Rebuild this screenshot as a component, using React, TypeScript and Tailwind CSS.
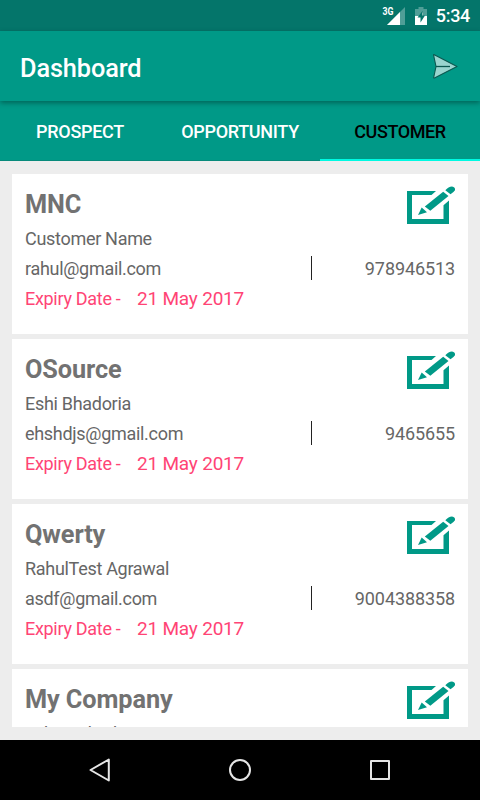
import { useState } from 'react'

interface Customer {
  company: string
  name: string
  email?: string
  phone?: string
  expiry?: string
}

const customers: Customer[] = [
  { company: 'MNC', name: 'Customer Name', email: 'rahul@gmail.com', phone: '978946513', expiry: '21 May 2017' },
  { company: 'OSource', name: 'Eshi Bhadoria', email: 'ehshdjs@gmail.com', phone: '9465655', expiry: '21 May 2017' },
  { company: 'Qwerty', name: 'RahulTest Agrawal', email: 'asdf@gmail.com', phone: '9004388358', expiry: '21 May 2017' },
  { company: 'My Company', name: 'Eshita Bhadoria' },
]

const tabs = ['PROSPECT', 'OPPORTUNITY', 'CUSTOMER']

function StatusBar() {
  return (
    <div className="flex h-[31px] shrink-0 items-center justify-end bg-[#04756a] pr-[10px] text-white">
      <svg className="h-[31px] w-[54px]" viewBox="380 0 54 31">
        <text x="382.5" y="15" fontSize="11.5" fontWeight="700" fill="#fff" textLength="11" lengthAdjust="spacingAndGlyphs">3G</text>
        <path d="M405 7V25H387Z" fill="#fff" fillOpacity=".3" />
        <path d="M400 12V25H387Z" fill="#fff" />
        <path d="M415 9H418.500V7H423.500V9H427V25H415Z" fill="#fff" fillOpacity=".3" />
        <path d="M415 16H420L423 12V16H427V25H415Z" fill="#fff" />
        <path d="M422.500 11L417.500 17.500H420.500V22.500L425 15.500H422.500Z" fill="#04756a" />
      </svg>
      <span className="w-[36px] pt-px text-right text-[18px] leading-none font-medium tracking-[-0.3px] whitespace-nowrap">5:34</span>
    </div>
  )
}

function SendIcon() {
  return (
    <svg className="h-[26px] w-[26px]" viewBox="0 0 26 26">
      <path
        d="M1.800 1.600Q1.400 1.300 1.700 2.700L4 13.500L1.700 24.300Q1.500 25.400 2.500 24.900L25 13.500Z"
        fill="#99d5cf"
        stroke="#0b5850"
        strokeWidth="1.100"
        strokeLinejoin="round"
      />
      <path d="M4 13.500H18" stroke="#0b5850" strokeWidth="1.300" />
    </svg>
  )
}

function EditIcon() {
  return (
    <svg className="h-[38px] w-[49px]" viewBox="0 0 49 38" fill="#009987">
      <path d="M0 5H29L24.500 9H5V33H36.500V19.200L42 14.500V38H0Z" />
      <path d="M11 29L14.700 21.500L20 26.300Z" />
      <path d="M17.800 20.500L36.200 5.700L41.500 9.900L23.300 24.800Z" />
      <path d="M38.300 4.300Q41.500 .5 45 .5Q48.500 1 48 4.300Q46.500 6.500 43.500 8.200Z" />
    </svg>
  )
}

function CustomerCard({ customer }: { customer: Customer }) {
  return (
    <article className="relative h-[160px] shrink-0 bg-white px-[13px] pt-[15px] text-[18px] tracking-[-0.3px] text-[#666]">
      <button aria-label="Edit" className="absolute top-[12px] right-[12px]">
        <EditIcon />
      </button>
      <h2 className="text-[25.300px] leading-[32px] font-bold tracking-[-0.1px] text-[#727272]">{customer.company}</h2>
      <p className="mt-[3px] leading-[30px]">{customer.name}</p>
      {customer.email && (
        <div className="flex h-[30px] items-center leading-[30px]">
          <span className="w-[286px]">{customer.email}</span>
          <span className="mb-[2px] h-[24px] w-px bg-[#222]" />
          <span className="flex-1 text-right tracking-[-0.1px]">{customer.phone}</span>
        </div>
      )}
      {customer.expiry && (
        <div className="flex leading-[30px] text-[#ff4475]">
          <span className="w-[112px]">Expiry Date -</span>
          <span className="text-[19px] tracking-[-0.2px]">{customer.expiry}</span>
        </div>
      )}
    </article>
  )
}

function NavigationBar() {
  return (
    <div className="flex h-[60px] shrink-0 items-center justify-center gap-[116px] bg-black">
      <svg className="h-6 w-6" viewBox="0 0 24 24" fill="none" stroke="#e6e6e6" strokeWidth="2" strokeLinejoin="round">
        <path d="M20.800 1.500V22.500L2.500 12Z" />
      </svg>
      <svg className="h-6 w-6" viewBox="0 0 24 24" fill="none" stroke="#e6e6e6" strokeWidth="2">
        <circle cx="12" cy="12" r="10" />
      </svg>
      <svg className="h-6 w-6" viewBox="0 0 24 24" fill="none" stroke="#e6e6e6" strokeWidth="2" strokeLinejoin="round">
        <path d="M3 3H21V21H3Z" />
      </svg>
    </div>
  )
}

export default function App() {
  const [active, setActive] = useState('CUSTOMER')

  return (
    <div className="flex h-[800px] w-[480px] flex-col overflow-hidden bg-[#ededed] font-['Roboto',sans-serif]">
      <StatusBar />
      <header className="z-10 flex h-[70px] shrink-0 items-center justify-between bg-[#009987] pr-[22px] pl-[20px] shadow-[0_2px_5px_rgba(0,0,0,0.35)]">
        <h1 className="pt-[5px] text-[25.300px] font-medium tracking-[-0.1px] text-white">Dashboard</h1>
        <button aria-label="Send">
          <SendIcon />
        </button>
      </header>
      <nav className="flex h-[60px] shrink-0 bg-[#009987]">
        {tabs.map((tab) => (
          <button
            key={tab}
            onClick={() => setActive(tab)}
            className={
              tab === active
                ? 'w-[160px] border-b-2 border-[#00f9e2] pt-[3px] text-[18px] font-medium tracking-[-0.4px] text-black'
                : 'w-[160px] border-b border-[#078a7b] pt-[2px] text-[18px] font-medium tracking-[-0.3px] text-white'
            }
          >
            {tab}
          </button>
        ))}
      </nav>
      <main className="min-h-0 flex-1 px-[12px] pt-[13px] pb-[13px]">
        <div className="flex h-full flex-col gap-[5px] overflow-hidden">
          {customers.map((customer) => (
            <CustomerCard key={customer.company} customer={customer} />
          ))}
        </div>
      </main>
      <NavigationBar />
    </div>
  )
}
